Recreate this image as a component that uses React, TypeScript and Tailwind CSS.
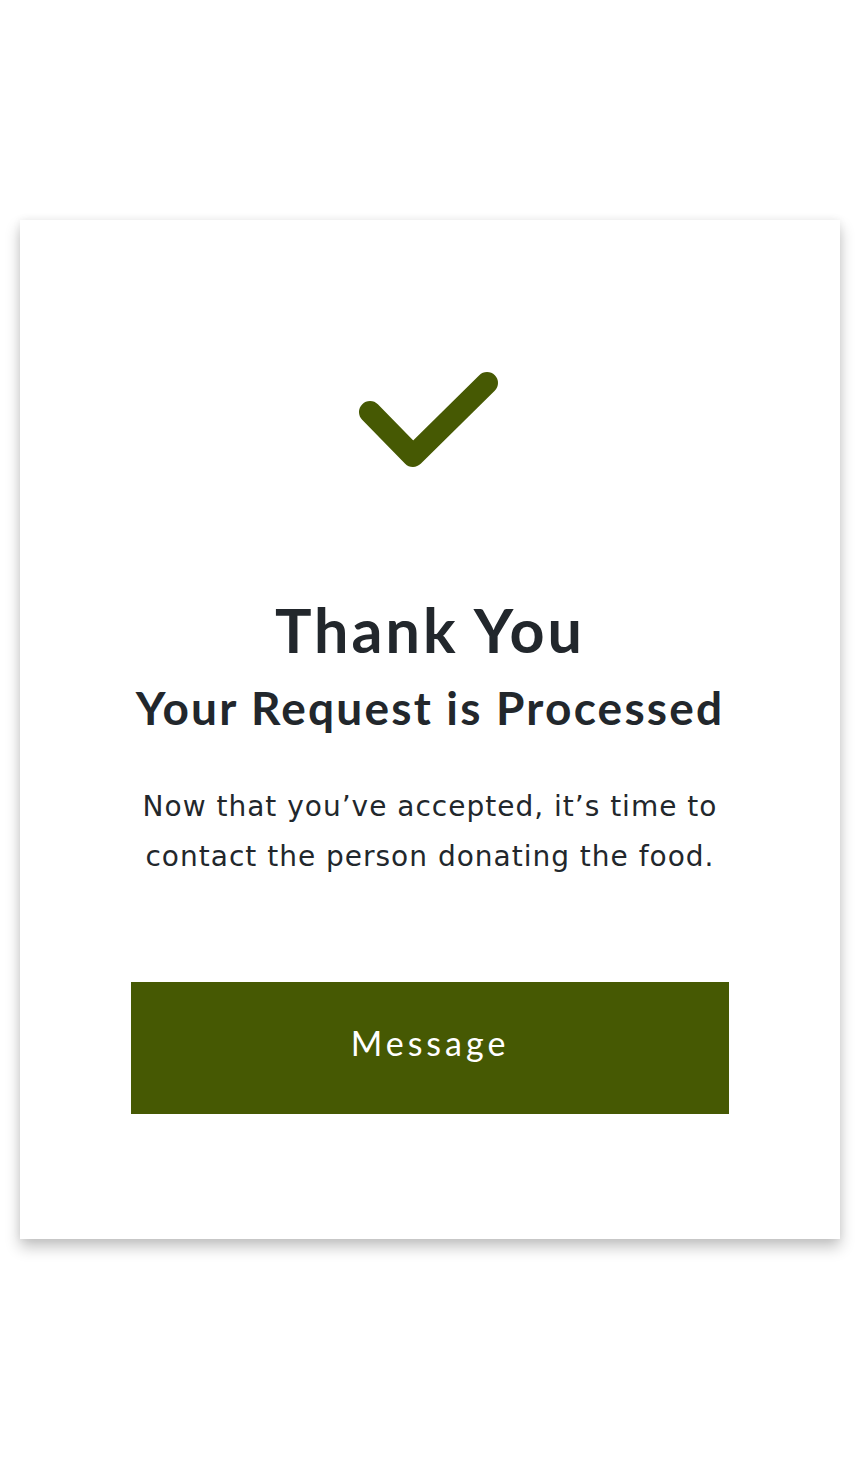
import React from "react";

function CheckMark() {
  return (
    <svg width="148" height="100" viewBox="0 0 148 100" fill="none">
      <path
        d="M14 42 L57 86 L131 13"
        stroke="#465903"
        strokeWidth="22"
        strokeLinecap="round"
        strokeLinejoin="round"
      />
    </svg>
  );
}

export default function App() {
  return (
    <div className="min-h-[1458px] w-full bg-white px-[20px] pt-[220px]">
      {/* Tarjeta */}
      <div className="flex flex-col items-center bg-white pt-[150px] pb-[125px] shadow-[0_8px_14px_rgba(0,0,0,0.24),0_0_8px_rgba(0,0,0,0.06)]">
        <CheckMark />

        <h1 className="mt-[128px] font-['Lato',sans-serif] text-[61px] font-bold leading-[64px] tracking-[3px] text-[#22272c]">
          Thank You
        </h1>
        <h2 className="mt-[20px] font-['Lato',sans-serif] text-[46px] font-bold leading-[52px] tracking-[2.2px] text-[#22272c]">
          Your Request is Processed
        </h2>

        <p className="mt-[48px] text-center font-['DejaVu_Sans',sans-serif] text-[28px] leading-[50px] tracking-[1px] text-[#22272c]">
          Now that you’ve accepted, it’s time to
          <br />
          contact the person donating the food.
        </p>

        <button className="mt-[100px] flex h-[132px] w-[598px] items-center justify-center bg-[#465903] pb-[12px] font-['Lato',sans-serif] text-[34px] tracking-[4px] text-white">
          Message
        </button>
      </div>
    </div>
  );
}
